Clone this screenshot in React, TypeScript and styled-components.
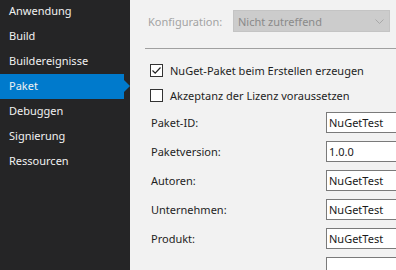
import { createGlobalStyle, styled } from "styled-components";

const Global = createGlobalStyle`
    html, body {
        margin: 0;
        padding: 0;
        background: #f2f2f2;
    }
    * {
        box-sizing: border-box;
    }
`;

const Page = styled.div`
    display: flex;
    width: 396px;
    height: 270px;
    overflow: hidden;
    font-family: "Noto Sans", "Open Sans", sans-serif;
    font-size: 11px;
`;

const Sidebar = styled.nav`
    width: 130px;
    flex-shrink: 0;
    background: #252526;
    display: flex;
    flex-direction: column;
`;

const NavItem = styled.div<{ $active?: boolean }>`
    position: relative;
    flex-shrink: 0;
    height: 25px;
    width: 124px;
    line-height: 24px;
    padding-left: 9px;
    color: #f1f1f1;
    background: ${(p) => (p.$active ? "#007acc" : "transparent")};
    &:first-child {
        margin-top: -1px;
    }
    &::after {
        content: "";
        display: ${(p) => (p.$active ? "block" : "none")};
        position: absolute;
        right: -6px;
        top: 6px;
        border-top: 6px solid transparent;
        border-bottom: 6px solid transparent;
        border-left: 6px solid #007acc;
    }
`;

const Main = styled.main`
    flex: 1;
    min-width: 0;
    padding-left: 15px;
    padding-top: 10px;
    display: flex;
    flex-direction: column;
    color: #1e1e1e;
    & > * {
        flex-shrink: 0;
    }
`;

const ConfigRow = styled.div`
    display: flex;
    align-items: center;
    height: 22px;
`;

const ConfigLabel = styled.span`
    width: 88px;
    padding-left: 3px;
    color: #a3a3a3;
`;

const Dropdown = styled.div`
    width: 157px;
    height: 22px;
    background: #cccccc;
    border: 1px solid #c4c4c4;
    color: #8a8a8a;
    display: flex;
    align-items: center;
    justify-content: space-between;
    padding: 0 5px 0 4px;
`;

const Separator = styled.div`
    height: 1px;
    background: #a0a0a0;
    margin-top: 16px;
    margin-right: -10px;
`;

const CheckRow = styled.label`
    display: flex;
    align-items: center;
    height: 25px;
    padding-left: 5px;
    gap: 7px;
    &:first-of-type {
        margin-top: 9px;
    }
`;

const Box = styled.span`
    width: 13px;
    height: 13px;
    border: 1px solid #333333;
    background: #ffffff;
    display: flex;
    align-items: center;
    justify-content: center;
`;

const Fields = styled.div`
    display: grid;
    grid-template-columns: 181px 1fr;
    grid-auto-rows: 29px;
    align-items: center;
`;

const FieldLabel = styled.span`
    padding-left: 6px;
`;

const Input = styled.div`
    width: 100px;
    height: 21px;
    background: #ffffff;
    border: 1px solid #7a7a7a;
    padding-left: 2px;
    line-height: 19px;
    color: #1a1a1a;
`;

const navItems = ["Anwendung", "Build", "Buildereignisse", "Paket", "Debuggen", "Signierung", "Ressourcen"];

const fields = [
    ["Paket-ID:", "NuGetTest"],
    ["Paketversion:", "1.0.0"],
    ["Autoren:", "NuGetTest"],
    ["Unternehmen:", "NuGetTest"],
    ["Produkt:", "NuGetTest"],
    ["", ""],
];

export default function App() {
    return (
        <Page>
            <Global />
            <Sidebar>
                {navItems.map((n) => (
                    <NavItem key={n} $active={n === "Paket"}>{n}</NavItem>
                ))}
            </Sidebar>
            <Main>
                <ConfigRow>
                    <ConfigLabel>Konfiguration:</ConfigLabel>
                    <Dropdown>
                        <span>Nicht zutreffend</span>
                        <svg width="9" height="5" viewBox="0 0 9 5">
                            <path d="M0.5 0.5 L4.5 4.5 L8.5 0.5" fill="none" stroke="#a8a8a8" strokeWidth="1" />
                        </svg>
                    </Dropdown>
                </ConfigRow>
                <Separator />
                <CheckRow>
                    <Box>
                        <svg width="11" height="11" viewBox="0 0 11 11">
                            <path d="M1.5 5.5 L4.2 8.2 L9.5 2.5" fill="none" stroke="#222" strokeWidth="1.2" />
                        </svg>
                    </Box>
                    NuGet-Paket beim Erstellen erzeugen
                </CheckRow>
                <CheckRow>
                    <Box />
                    Akzeptanz der Lizenz voraussetzen
                </CheckRow>
                <Fields>
                    {fields.map(([label, value], i) => (
                        <>
                            <FieldLabel key={"l" + i}>{label}</FieldLabel>
                            <Input key={"v" + i}>{value}</Input>
                        </>
                    ))}
                </Fields>
            </Main>
        </Page>
    );
}
